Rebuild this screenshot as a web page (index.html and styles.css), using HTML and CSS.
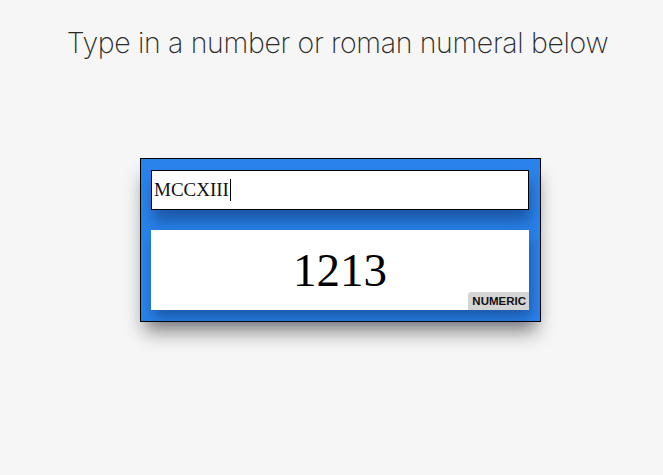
FILE: index.html
```html
<!DOCTYPE html>
<html>
<head>
<meta charset="utf-8">
<link rel="stylesheet" href="styles.css">
</head>
<body>
<div class="page">
  <h1 class="title">Type in a number or roman numeral below</h1>
  <div class="converter">
    <div class="field"><span class="value">MCCXIII</span><span class="caret"></span></div>
    <div class="result">
      <span class="number">1213</span>
      <span class="badge">NUMERIC</span>
    </div>
  </div>
</div>
</body>
</html>
```
FILE: styles.css
```css
html, body {
  margin: 0;
  padding: 0;
  background: #f6f6f6;
}
.page {
  width: 663px;
  height: 475px;
  display: flex;
  flex-direction: column;
  align-items: center;
  padding-left: 18px;
  box-sizing: border-box;
}
.title {
  margin: 23px 6px 0 0;
  font-family: Inter, "Noto Sans", sans-serif;
  font-weight: 200;
  font-size: 28.5px;
  line-height: 40px;
  color: #2a2a2a;
  letter-spacing: -0.35px;
  white-space: nowrap;
}
.converter {
  margin-top: 95px;
  width: 378px;
  padding: 11px 11px 11px 10px;
  background: #2a83ec;
  border: 1px solid #000;
  display: flex;
  flex-direction: column;
  gap: 20px;
  box-shadow: 0 14px 18px -4px rgba(0,0,0,0.45);
}
.field {
  height: 38px;
  background: #fff;
  border: 1px solid #000;
  display: flex;
  align-items: center;
  padding-left: 2px;
  font-family: "Liberation Serif", serif;
  font-size: 19px;
  color: #111;
  box-shadow: 2px 12px 14px rgba(10,40,90,0.45);
}
.caret {
  width: 1px;
  height: 22px;
  background: #000;
  margin-left: 1px;
}
.result {
  position: relative;
  height: 80px;
  background: #fff;
  display: flex;
  align-items: center;
  justify-content: center;
  box-shadow: 2px 8px 12px rgba(10,40,90,0.45);
}
.number {
  font-family: "Liberation Serif", serif;
  font-size: 47px;
  color: #000;
  line-height: 1;
  margin-top: 1px;
}
.badge {
  position: absolute;
  right: 0;
  bottom: 0;
  height: 18px;
  line-height: 19px;
  padding: 0 3px 0 4px;
  background: #d4d4d4;
  border-top-left-radius: 4px;
  font-family: "Liberation Sans", Arial, sans-serif;
  font-weight: bold;
  font-size: 11.5px;
  color: #111;
}
```
